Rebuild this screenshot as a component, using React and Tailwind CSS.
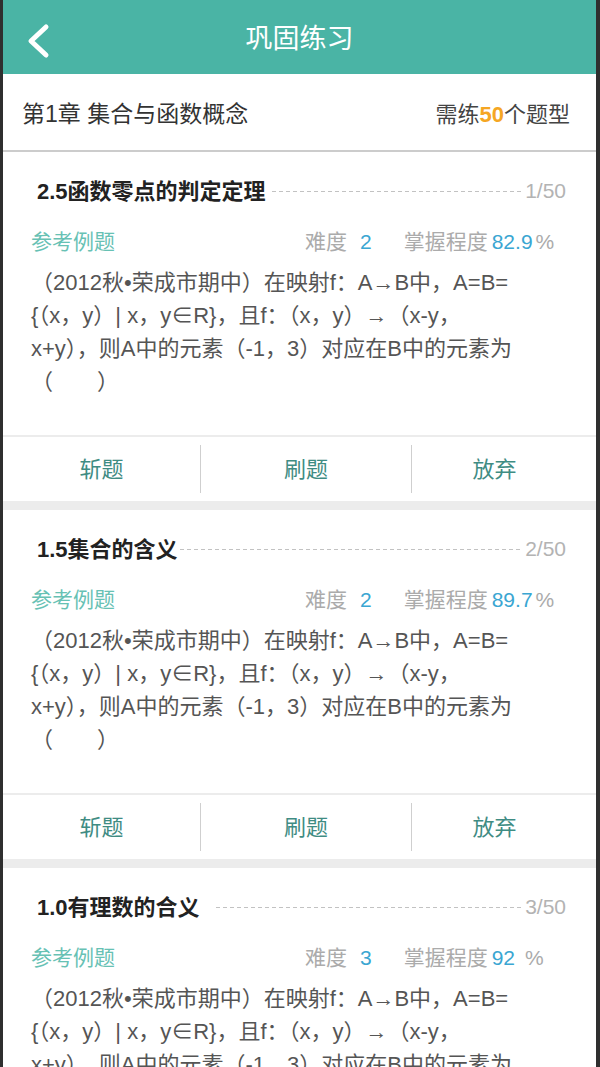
import React from 'react'

const lines = [
  '（2012秋•荣成市期中）在映射f：A→B中，A=B=',
  '{（x，y）| x，y∈R}，且f：（x，y）→（x-y，',
  'x+y），则A中的元素（-1，3）对应在B中的元素为',
  '（　　）',
]

const cards = [
  { title: '2.5函数零点的判定定理', idx: '1/50', level: 2, pct: '82.9', dash: 'ml-[6px]', pctGap: 'ml-[3px]' },
  { title: '1.5集合的含义', idx: '2/50', level: 2, pct: '89.7', dash: 'ml-[2px]', pctGap: 'ml-[3px]' },
  { title: '1.0有理数的合义', idx: '3/50', level: 3, pct: '92', dash: 'ml-[16px]', pctGap: 'ml-[10px]' },
]

function PracticeCard({ card }) {
  return (
    <div className="bg-white">
      <div className="pt-[27px] pl-[28px] pr-[30px] pb-[37px]">
        {/* title row */}
        <div className="flex h-[24px] items-center">
          <span className="pl-[6px] text-[22px] font-bold text-[#222] whitespace-nowrap">{card.title}</span>
          <div className={`h-px flex-1 bg-[repeating-linear-gradient(to_right,#c2c2c2_0_4px,transparent_4px_7px)] ${card.dash} mr-[3px]`} />
          <span className="text-[21px] text-[#b3b3b3]">{card.idx}</span>
        </div>

        {/* meta row */}
        <div className="mt-[27px] flex h-[24px] items-center text-[21px] whitespace-nowrap">
          <span className="w-[274px] text-[#67c1b4]">参考例题</span>
          <span className="text-[#ababab]">难度</span>
          <span className="ml-[13px] text-[#3aa6d2]">{card.level}</span>
          <span className="ml-[32px] text-[#ababab]">掌握程度</span>
          <span className="ml-[4px] text-[#3aa6d2]">{card.pct}</span>
          <span className={`${card.pctGap} text-[#ababab]`}>%</span>
        </div>

        {/* question */}
        <div className="mt-[12px] text-[22px] leading-[33px] text-[#555]">
          {lines.map((l, i) => (
            <div key={i} className="whitespace-pre">{l}</div>
          ))}
        </div>
      </div>

      {/* actions */}
      <div className="flex h-[66px] items-center border-t-2 border-[#ececec] text-[22px] text-[#3f8c83]">
        <button className="w-[197px] text-center">斩题</button>
        <div className="h-[48px] w-px bg-[#cfcfcf]" />
        <button className="w-[210px] text-center">刷题</button>
        <div className="h-[48px] w-px bg-[#cfcfcf]" />
        <button className="flex-1 pr-[19px] text-center">放弃</button>
      </div>
      <div className="h-[9px] bg-[#ececec]" />
    </div>
  )
}

export default function App() {
  return (
    <div className="h-[1067px] overflow-hidden border-l-[3px] border-r-[4px] border-[#2f2f2f] bg-white font-['Liberation_Sans','Noto_Sans_CJK_SC',sans-serif]">
      {/* Header */}
      <div className="relative flex h-[74px] items-center justify-center bg-[#4ab4a5] pt-[5px]">
        <svg className="absolute left-[23px] top-[23px]" width="26" height="36" viewBox="0 0 26 36" fill="none">
          <polyline points="20,4 5,18 20,32" stroke="white" strokeWidth="5" strokeLinecap="round" strokeLinejoin="round" />
        </svg>
        <span className="text-[27px] text-white">巩固练习</span>
      </div>

      {/* Chapter bar */}
      <div className="flex h-[78px] items-center justify-between border-b-2 border-[#cccccc] pl-[19px] pr-[26px] pt-[4px]">
        <span className="text-[23px] text-[#333]">第1章 集合与函数概念</span>
        <span className="text-[22px] text-[#444]">
          需练<span className="font-bold text-[#f5a623]">50</span>个题型
        </span>
      </div>

      {cards.map((c) => (
        <PracticeCard key={c.idx} card={c} />
      ))}
    </div>
  )
}
